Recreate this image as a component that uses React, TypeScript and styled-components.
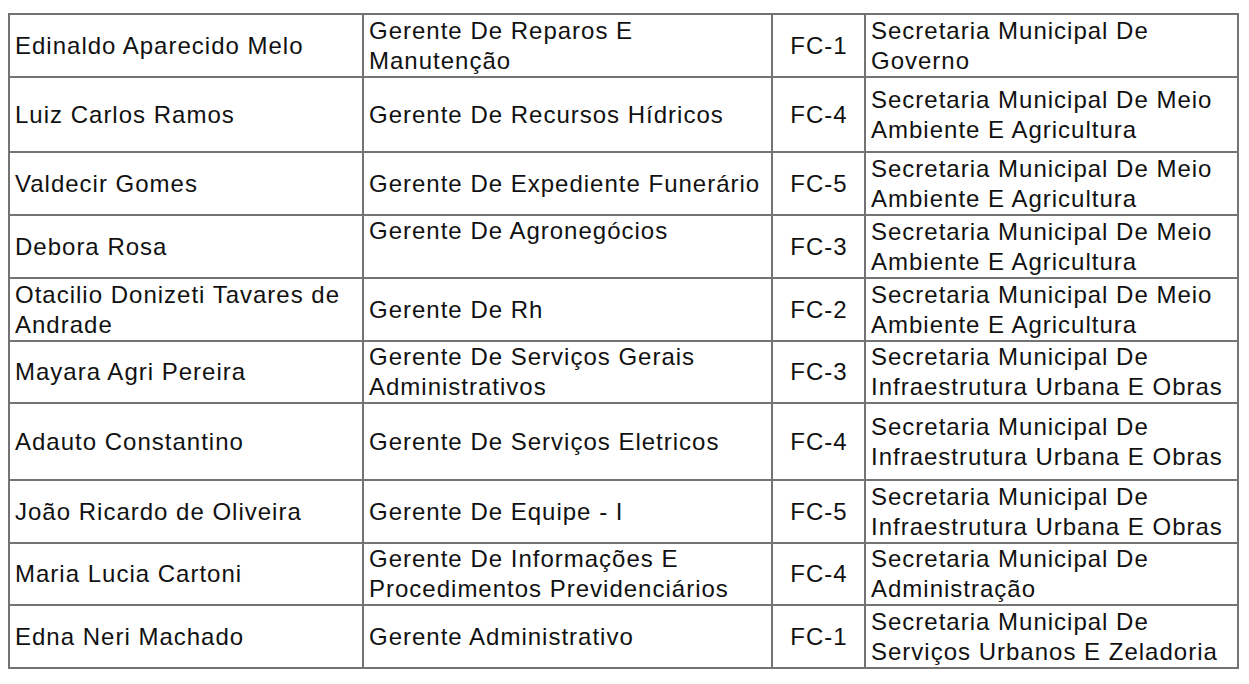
import React from "react";
import styled, { createGlobalStyle } from "styled-components";

const Global = createGlobalStyle`
  html, body { margin: 0; padding: 0; background: #ffffff; }
  body { font-family: "Liberation Sans", Arial, sans-serif; }
`;

const Page = styled.div`
  padding: 13px 0 0 8px;
`;

const Table = styled.table`
  border-collapse: collapse;
  table-layout: fixed;
  width: 1229px;
  font-family: "Liberation Sans", Arial, sans-serif;
  font-size: 24px;
  letter-spacing: 1px;
  line-height: 30px;
  color: #111111;
`;

const Row = styled.tr<{ $h: number }>`
  height: ${(p) => p.$h}px;
`;

const Cell = styled.td<{ $align?: "left" | "center"; $valign?: "top" | "middle" }>`
  border: 2px solid #737373;
  padding: 0 4px 0 5px;
  text-align: ${(p) => p.$align ?? "left"};
  vertical-align: ${(p) => p.$valign ?? "middle"};
  white-space: nowrap;
  overflow: hidden;
`;

const Line = styled.span`
  display: block;
`;

type RowData = {
  h: number;
  name: string[];
  role: string[];
  roleTop?: boolean;
  code: string;
  dept: string[];
};

const rows: RowData[] = [
  { h: 63, name: ["Edinaldo Aparecido Melo"], role: ["Gerente De Reparos E", "Manutenção"], code: "FC-1", dept: ["Secretaria Municipal De", "Governo"] },
  { h: 75, name: ["Luiz Carlos Ramos"], role: ["Gerente De Recursos Hídricos"], code: "FC-4", dept: ["Secretaria Municipal De Meio", "Ambiente E Agricultura"] },
  { h: 63, name: ["Valdecir Gomes"], role: ["Gerente De Expediente Funerário"], code: "FC-5", dept: ["Secretaria Municipal De Meio", "Ambiente E Agricultura"] },
  { h: 63, name: ["Debora Rosa"], role: ["Gerente De Agronegócios"], roleTop: true, code: "FC-3", dept: ["Secretaria Municipal De Meio", "Ambiente E Agricultura"] },
  { h: 63, name: ["Otacilio Donizeti Tavares de", "Andrade"], role: ["Gerente De Rh"], code: "FC-2", dept: ["Secretaria Municipal De Meio", "Ambiente E Agricultura"] },
  { h: 62, name: ["Mayara Agri Pereira"], role: ["Gerente De Serviços Gerais", "Administrativos"], code: "FC-3", dept: ["Secretaria Municipal De", "Infraestrutura Urbana E Obras"] },
  { h: 77, name: ["Adauto Constantino"], role: ["Gerente De Serviços Eletricos"], code: "FC-4", dept: ["Secretaria Municipal De", "Infraestrutura Urbana E Obras"] },
  { h: 63, name: ["João Ricardo de Oliveira"], role: ["Gerente De Equipe - I"], code: "FC-5", dept: ["Secretaria Municipal De", "Infraestrutura Urbana E Obras"] },
  { h: 62, name: ["Maria Lucia Cartoni"], role: ["Gerente De Informações E", "Procedimentos Previdenciários"], code: "FC-4", dept: ["Secretaria Municipal De", "Administração"] },
  { h: 63, name: ["Edna Neri Machado"], role: ["Gerente Administrativo"], code: "FC-1", dept: ["Secretaria Municipal De", "Serviços Urbanos E Zeladoria"] },
];

const Lines = ({ items }: { items: string[] }) => (
  <>
    {items.map((t, i) => (
      <Line key={i}>{t}</Line>
    ))}
  </>
);

export default function App() {
  return (
    <Page>
      <Global />
      <Table>
        <colgroup>
          <col style={{ width: 354 }} />
          <col style={{ width: 409 }} />
          <col style={{ width: 93 }} />
          <col style={{ width: 373 }} />
        </colgroup>
        <tbody>
          {rows.map((r, i) => (
            <Row key={i} $h={r.h}>
              <Cell>
                <Lines items={r.name} />
              </Cell>
              <Cell $valign={r.roleTop ? "top" : "middle"}>
                <Lines items={r.role} />
              </Cell>
              <Cell $align="center">{r.code}</Cell>
              <Cell>
                <Lines items={r.dept} />
              </Cell>
            </Row>
          ))}
        </tbody>
      </Table>
    </Page>
  );
}
